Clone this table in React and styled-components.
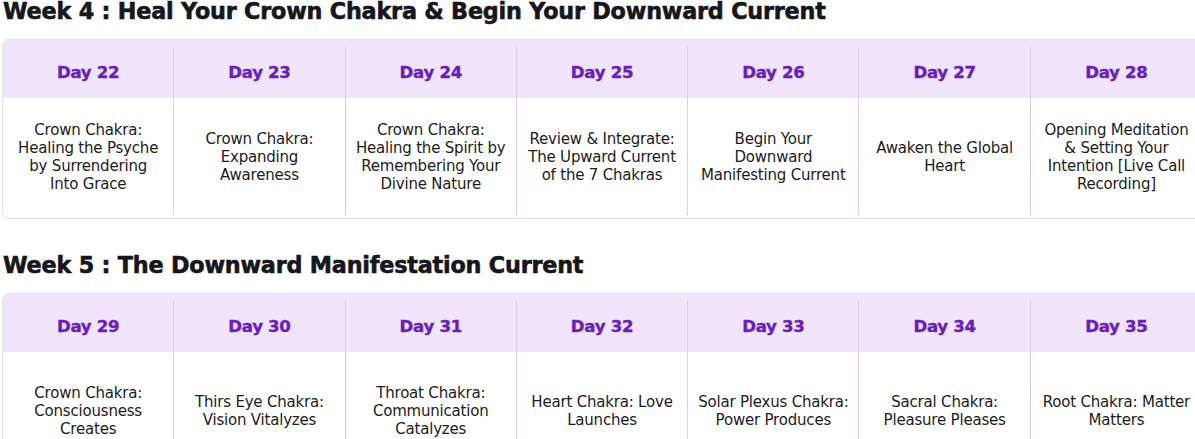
import React from 'react';
import styled, { createGlobalStyle } from 'styled-components';

const GlobalStyle = createGlobalStyle`
	html, body {
		margin: 0;
		padding: 0;
		background: #ffffff;
		overflow: hidden;
	}
`;

const Page = styled.div`
	width: 1195px;
	height: 439px;
	overflow: hidden;
	padding: 0 0 0 2px;
	box-sizing: border-box;
`;

const WeekTitle = styled.h2`
	margin: 0;
	height: 22px;
	line-height: 22px;
	font-family: 'DejaVu Sans', sans-serif;
	font-weight: 700;
	font-size: 22.3px;
	letter-spacing: -0.2px;
	-webkit-text-stroke: 0.6px #16161d;
	color: #16161d;
	white-space: nowrap;
	margin-top: ${(p) => p.$top}px;
	padding-left: 1px;
`;

const Card = styled.div`
	margin-top: 17px;
	width: 1200px;
	border: 1px solid #e6e3ea;
	border-radius: 7px;
	background: linear-gradient(#f0e5fa 0, #f0e5fa 58px, #ffffff 58px);
	height: ${(p) => p.$height}px;
	box-sizing: border-box;
	overflow: hidden;
`;

const Row = styled.div`
	display: grid;
	grid-template-columns: repeat(7, 171.3px);
	padding: 7px 0 3px;
	height: 100%;
	box-sizing: border-box;
`;

const Column = styled.div`
	display: flex;
	flex-direction: column;
	border-right: 1px solid #dccbe9;
	&:last-child {
		border-right: none;
	}
`;

const DayLabel = styled.div`
	height: 51px;
	flex: none;
	display: flex;
	align-items: center;
	justify-content: center;
	font-family: 'DejaVu Sans', sans-serif;
	font-weight: 700;
	font-size: 16.6px;
	color: #6a1dc4;
	-webkit-text-stroke: 0.4px #6a1dc4;
	letter-spacing: -0.3px;
`;

const Lesson = styled.div`
	flex: 1;
	display: flex;
	align-items: center;
	justify-content: center;
	text-align: center;
	padding: 0 4px;
	white-space: nowrap;
	font-family: 'DejaVu Sans', sans-serif;
	font-size: 15px;
	line-height: 18px;
	letter-spacing: -0.2px;
	color: #1c1c22;
`;

const weeks = [
	{
		title: 'Week 4 : Heal Your Crown Chakra & Begin Your Downward Current',
		top: 0,
		height: 180,
		days: [
			['Day 22', ['Crown Chakra:', 'Healing the Psyche', 'by Surrendering', 'Into Grace']],
			['Day 23', ['Crown Chakra:', 'Expanding', 'Awareness']],
			['Day 24', ['Crown Chakra:', 'Healing the Spirit by', 'Remembering Your', 'Divine Nature']],
			['Day 25', ['Review & Integrate:', 'The Upward Current', 'of the 7 Chakras']],
			['Day 26', ['Begin Your', 'Downward', 'Manifesting Current']],
			['Day 27', ['Awaken the Global', 'Heart']],
			['Day 28', ['Opening Meditation', '& Setting Your', 'Intention [Live Call', 'Recording]']],
		],
	},
	{
		title: 'Week 5 : The Downward Manifestation Current',
		top: 35,
		height: 180,
		days: [
			['Day 29', ['Crown Chakra:', 'Consciousness', 'Creates']],
			['Day 30', ['Thirs Eye Chakra:', 'Vision Vitalyzes']],
			['Day 31', ['Throat Chakra:', 'Communication', 'Catalyzes']],
			['Day 32', ['Heart Chakra: Love', 'Launches']],
			['Day 33', ['Solar Plexus Chakra:', 'Power Produces']],
			['Day 34', ['Sacral Chakra:', 'Pleasure Pleases']],
			['Day 35', ['Root Chakra: Matter', 'Matters']],
		],
	},
];

export default function App() {
	return (
		<Page>
			<GlobalStyle />
			{weeks.map((week) => (
				<section key={week.title}>
					<WeekTitle $top={week.top}>{week.title}</WeekTitle>
					<Card $height={week.height}>
						<Row>
							{week.days.map(([day, lines]) => (
								<Column key={day}>
									<DayLabel>{day}</DayLabel>
									<Lesson>
										<div>
											{lines.map((line, i) => (
												<div key={i}>{line}</div>
											))}
										</div>
									</Lesson>
								</Column>
							))}
						</Row>
					</Card>
				</section>
			))}
		</Page>
	);
}
